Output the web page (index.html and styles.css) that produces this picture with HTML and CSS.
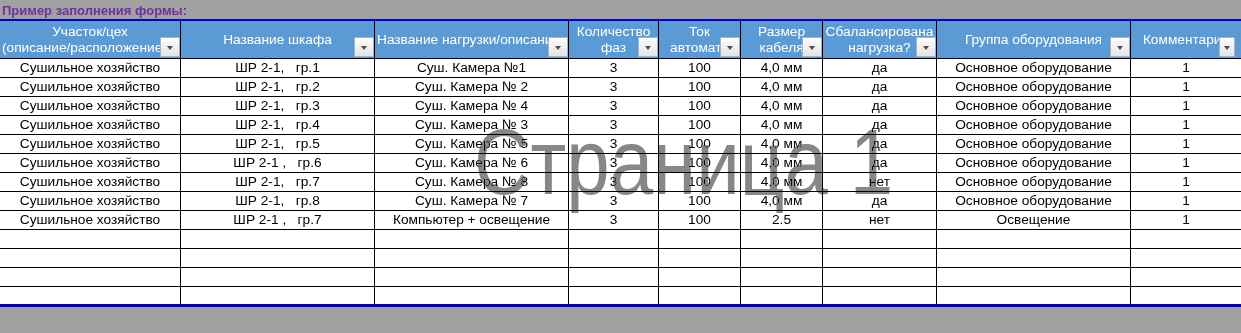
FILE: index.html
```html
<!DOCTYPE html>
<html lang="ru">
<head>
<meta charset="utf-8">
<title>Пример заполнения формы</title>
<link rel="stylesheet" href="styles.css">
</head>
<body>
<div class="page">
  <div class="title">Пример заполнения формы:</div>
  <div class="sheet">
    <div class="grid">
      <div class="hc"><span class="ln">Участок/цех</span><span class="ln left">(описание/расположение)</span><i class="dd"></i></div>
      <div class="hc"><span class="ln">Название шкафа</span><i class="dd"></i></div>
      <div class="hc"><span class="ln left">Название нагрузки/описание</span><i class="dd"></i></div>
      <div class="hc"><span class="ln">Количество</span><span class="ln">фаз</span><i class="dd"></i></div>
      <div class="hc"><span class="ln">Ток</span><span class="ln">автомата</span><i class="dd"></i></div>
      <div class="hc"><span class="ln">Размер</span><span class="ln">кабеля</span><i class="dd"></i></div>
      <div class="hc"><span class="ln">Сбалансирована</span><span class="ln">нагрузка?</span><i class="dd"></i></div>
      <div class="hc"><span class="ln">Группа оборудования</span><i class="dd"></i></div>
      <div class="hc end"><span class="ln">Комментарии</span><i class="dd dd-end"></i></div>

      <div class="c">Сушильное хозяйство</div><div class="c">ШР 2-1,   гр.1</div><div class="c">Суш. Камера №1</div><div class="c">3</div><div class="c">100</div><div class="c">4,0 мм</div><div class="c">да</div><div class="c">Основное оборудование</div><div class="c end">1</div>
      <div class="c">Сушильное хозяйство</div><div class="c">ШР 2-1,   гр.2</div><div class="c">Суш. Камера № 2</div><div class="c">3</div><div class="c">100</div><div class="c">4,0 мм</div><div class="c">да</div><div class="c">Основное оборудование</div><div class="c end">1</div>
      <div class="c">Сушильное хозяйство</div><div class="c">ШР 2-1,   гр.3</div><div class="c">Суш. Камера № 4</div><div class="c">3</div><div class="c">100</div><div class="c">4,0 мм</div><div class="c">да</div><div class="c">Основное оборудование</div><div class="c end">1</div>
      <div class="c">Сушильное хозяйство</div><div class="c">ШР 2-1,   гр.4</div><div class="c">Суш. Камера № 3</div><div class="c">3</div><div class="c">100</div><div class="c">4,0 мм</div><div class="c">да</div><div class="c">Основное оборудование</div><div class="c end">1</div>
      <div class="c">Сушильное хозяйство</div><div class="c">ШР 2-1,   гр.5</div><div class="c">Суш. Камера № 5</div><div class="c">3</div><div class="c">100</div><div class="c">4,0 мм</div><div class="c">да</div><div class="c">Основное оборудование</div><div class="c end">1</div>
      <div class="c">Сушильное хозяйство</div><div class="c">ШР 2-1 ,   гр.6</div><div class="c">Суш. Камера № 6</div><div class="c">3</div><div class="c">100</div><div class="c">4,0 мм</div><div class="c">да</div><div class="c">Основное оборудование</div><div class="c end">1</div>
      <div class="c">Сушильное хозяйство</div><div class="c">ШР 2-1,   гр.7</div><div class="c">Суш. Камера № 8</div><div class="c">3</div><div class="c">100</div><div class="c">4,0 мм</div><div class="c">нет</div><div class="c">Основное оборудование</div><div class="c end">1</div>
      <div class="c">Сушильное хозяйство</div><div class="c">ШР 2-1,   гр.8</div><div class="c">Суш. Камера № 7</div><div class="c">3</div><div class="c">100</div><div class="c">4,0 мм</div><div class="c">да</div><div class="c">Основное оборудование</div><div class="c end">1</div>
      <div class="c">Сушильное хозяйство</div><div class="c">ШР 2-1 ,   гр.7</div><div class="c">Компьютер + освещение</div><div class="c">3</div><div class="c">100</div><div class="c">2.5</div><div class="c">нет</div><div class="c">Освещение</div><div class="c end">1</div>

      <div class="c"></div><div class="c"></div><div class="c"></div><div class="c"></div><div class="c"></div><div class="c"></div><div class="c"></div><div class="c"></div><div class="c end"></div>
      <div class="c"></div><div class="c"></div><div class="c"></div><div class="c"></div><div class="c"></div><div class="c"></div><div class="c"></div><div class="c"></div><div class="c end"></div>
      <div class="c"></div><div class="c"></div><div class="c"></div><div class="c"></div><div class="c"></div><div class="c"></div><div class="c"></div><div class="c"></div><div class="c end"></div>
      <div class="c last"></div><div class="c last"></div><div class="c last"></div><div class="c last"></div><div class="c last"></div><div class="c last"></div><div class="c last"></div><div class="c last"></div><div class="c last end"></div>
    </div>
  </div>
  <div class="watermark">Страница 1</div>
</div>
</body>
</html>
```
FILE: styles.css
```css
html, body {
  margin: 0;
  padding: 0;
  background: #a1a1a1;
  overflow: hidden;
}
.page {
  position: relative;
  width: 1241px;
  height: 333px;
  font-family: "Liberation Sans", Arial, sans-serif;
  font-size: 13.7px;
}
.title {
  height: 19px;
  padding-left: 2px;
  font-weight: bold;
  font-size: 13px;
  line-height: 22px;
  color: #7030a0;
  white-space: nowrap;
}
.sheet {
  background: #ffffff;
  border-top: 2px solid #0000c8;
  border-bottom: 3px solid #0000c8;
}
.grid {
  display: grid;
  grid-template-columns: 181px 194px 194px 90px 82px 82px 114px 194px 110px;
}
.hc {
  position: relative;
  height: 37px;
  background: #5b9bd5;
  color: #ffffff;
  border-right: 1px solid #000;
  border-bottom: 1px solid #000;
  display: flex;
  flex-direction: column;
  justify-content: center;
  overflow: hidden;
  line-height: 16px;
}
.ln {
  display: block;
  white-space: nowrap;
  text-align: center;
}
.ln.left {
  text-align: left;
  padding-left: 2px;
}
.dd {
  position: absolute;
  right: 0;
  bottom: 1px;
  width: 20px;
  height: 20px;
  box-sizing: border-box;
  border: 1px solid #a9b4c2;
  background: linear-gradient(#fdfdfd, #e4e4e4);
  display: flex;
  align-items: center;
  justify-content: center;
}
.dd::after {
  content: "";
  width: 0;
  height: 0;
  border-left: 3.5px solid transparent;
  border-right: 3.5px solid transparent;
  border-top: 4px solid #4d4d4d;
  margin-top: 1px;
}
.dd-end {
  right: 6px;
  width: 16px;
}
.c {
  height: 18px;
  line-height: 18px;
  text-align: center;
  white-space: pre;
  overflow: hidden;
  color: #000;
  border-right: 1px solid #000;
  border-bottom: 1px solid #000;
}
.c.last {
  height: 17px;
  border-bottom: none;
}
.end {
  border-right: none;
}
.watermark {
  position: absolute;
  left: 474px;
  top: 116px;
  font-family: "Liberation Sans", Arial, sans-serif;
  font-size: 93px;
  line-height: 93px;
  color: #878787;
  white-space: nowrap;
  transform: scaleX(0.84);
  transform-origin: 0 0;
  mix-blend-mode: darken;
  pointer-events: none;
}
```
